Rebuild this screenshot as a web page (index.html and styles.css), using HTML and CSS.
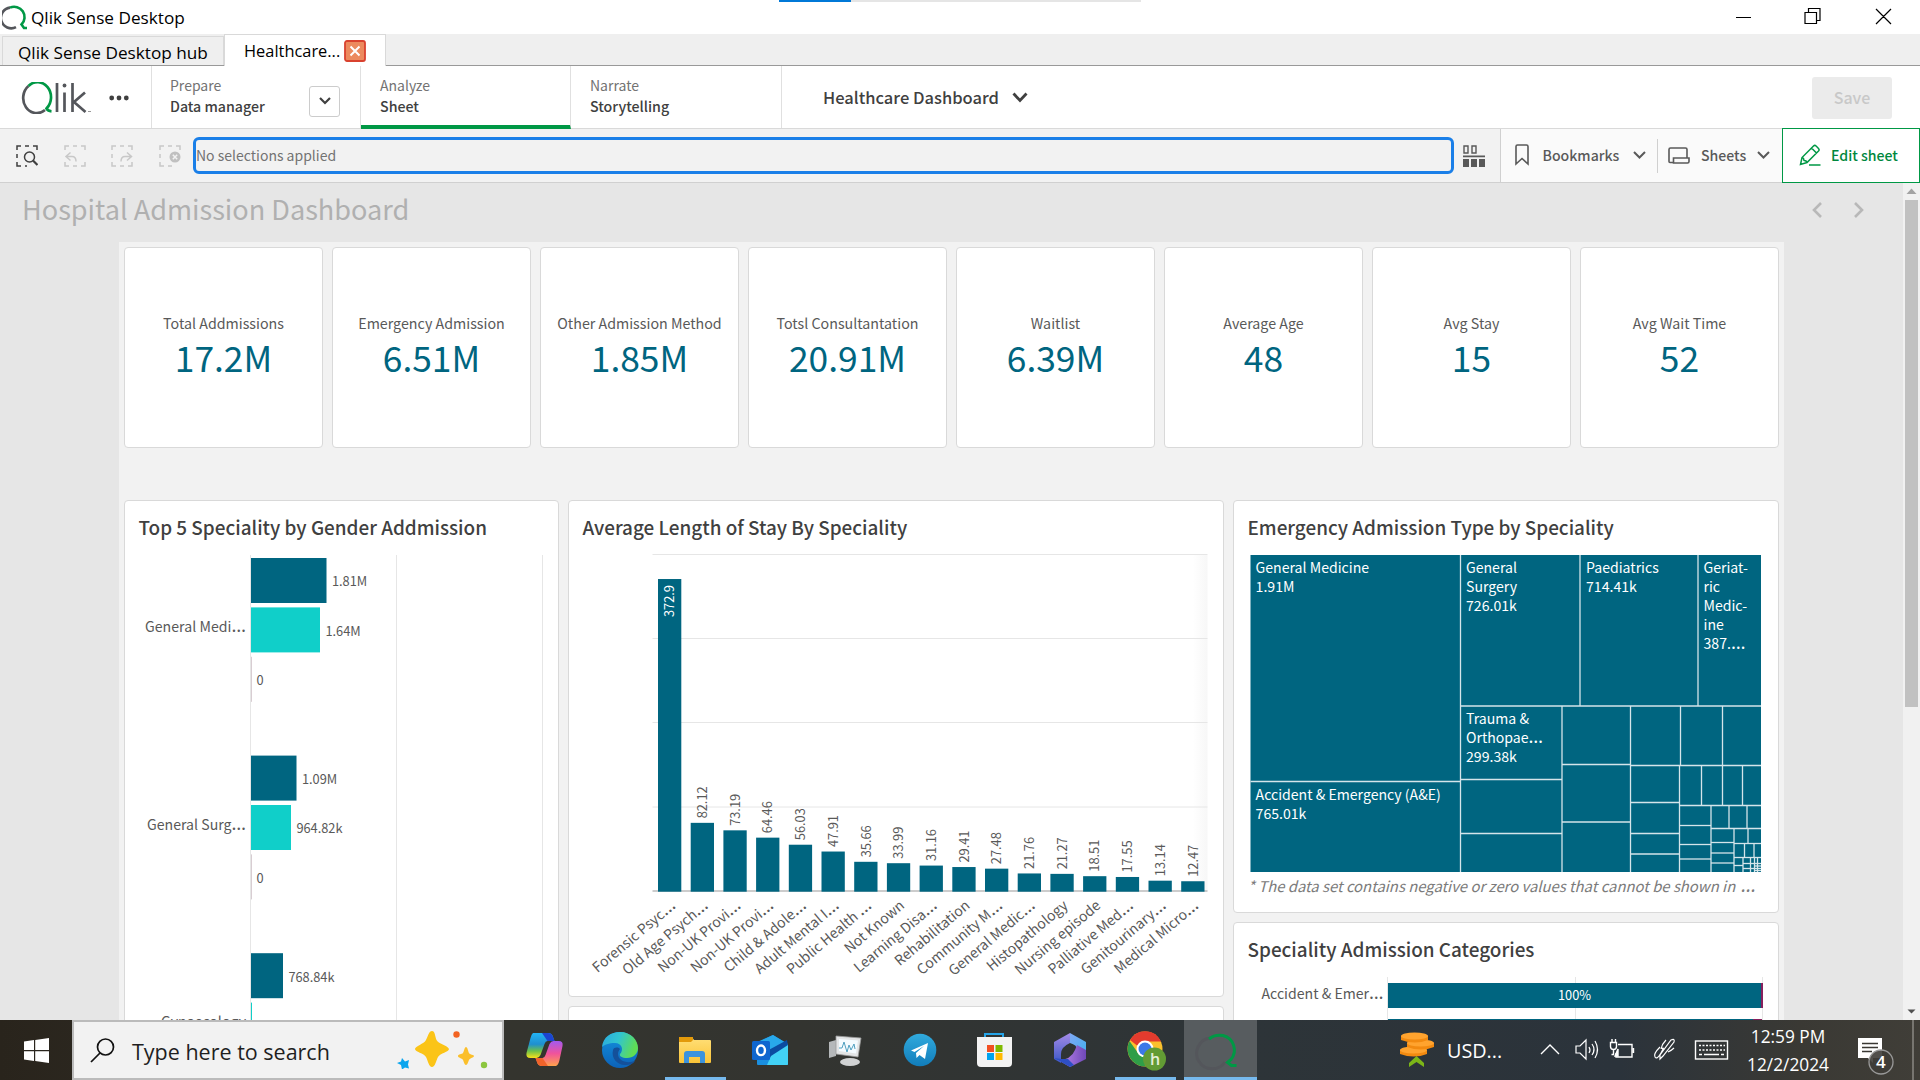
FILE: index.html
```html
<!DOCTYPE html>
<html lang="en">
<head>
<meta charset="utf-8">
<title>Qlik Sense Desktop</title>
<link rel="stylesheet" href="styles.css">
</head>
<body>
<div class="screen">
  <header class="titlebar">
    <svg class="app-icon" width="26" height="26" viewBox="0 0 26 26" fill="none" stroke-width="2.6"><path d="M14 23.2A10.4 10.4 0 1 1 8 3.6" stroke="#54565b"/><path d="M8 3.6A10.4 10.4 0 0 1 19.5 20.5L22 24h3" stroke="#009845"/></svg>
    <span class="app-name">Qlik Sense Desktop</span>
    <div class="load"><i></i></div>
    <svg class="winctl" width="200" height="34" viewBox="1720 0 200 34" fill="none" stroke="#000" stroke-width="1.2"><path d="M1736 17.5h15M1808.500 12.500v-4h11.500v12h-3M1805 12.500h11.500v11h-11.500zM1876 9l15 15M1891 9l-15 15"/></svg>
  </header>
  <div class="tabs">
    <div class="tab">Qlik Sense Desktop hub</div>
    <div class="tab active">Healthcare...<svg width="22" height="22" viewBox="0 0 22 22"><rect x="1" y="1" width="20" height="20" rx="2" fill="#ec8a5e" stroke="#d9422f" stroke-width="1.8"/><path d="M6.500 6.500l9 9M15.500 6.500l-9 9" stroke="#fff" stroke-width="2"/></svg></div>
  </div>
  <nav class="nav">
    <div class="brand">
      <svg width="70" height="32" viewBox="0 0 70 32" fill="none"><g stroke-width="2.700"><path d="M24 28A13 14.500 0 1 1 7.500 4" stroke="#54565b"/><path d="M7.500 4A13 14.500 0 0 1 25.500 26.500q1.500 2.500 5 2.800" stroke="#009845"/></g><path d="M36 1v29M43.500 10.500v19.500M51.500 1v29M64 10.500L53 20l11.500 10" stroke="#54565b" stroke-width="2.700"/><circle cx="43.500" cy="3.500" r="1.900" fill="#54565b"/><path d="M67 29.500h3" stroke="#999" stroke-width="1"/></svg>
      <svg width="20" height="6" viewBox="0 0 20 6" fill="#404040"><circle cx="2.700" cy="3" r="2.400"/><circle cx="10" cy="3" r="2.400"/><circle cx="17.300" cy="3" r="2.400"/></svg>
    </div>
    <div class="step prep"><div><small>Prepare</small><b>Data manager</b></div><span class="drop"><svg width="12" height="8" viewBox="0 0 12 8" fill="none" stroke="#404040" stroke-width="2.200"><path d="M1 1l5 5 5-5"/></svg></span></div>
    <div class="step current"><div><small>Analyze</small><b>Sheet</b></div></div>
    <div class="step"><div><small>Narrate</small><b>Storytelling</b></div></div>
    <div class="appname">Healthcare Dashboard<svg width="16" height="11" viewBox="0 0 16 11" fill="none" stroke="#404040" stroke-width="2.800"><path d="M1.500 1.500L8 8.500l6.500-7"/></svg></div>
    <button class="save">Save</button>
  </nav>
  <div class="toolbar">
    <div class="seltools">
      <svg width="22" height="22" viewBox="0 0 22 22" fill="none" stroke="#404040" stroke-width="1.500"><path d="M1 5V1h4M9 1h4M17 1h4v4M1 9v4M1 17v4h4M9 21h2"/><circle cx="13.500" cy="12" r="5"/><path d="M17 15.500l4.500 4.500" stroke-width="2.200"/></svg>
      <svg width="22" height="22" viewBox="0 0 22 22" fill="none" stroke="#c8c8c8" stroke-width="1.500"><path d="M1 5V1h4M9 1h4M17 1h4v4M1 17v4h4M9 21h4M17 21h4v-4M6.500 7.500L2 11.500l4.500 4M2 11.500h6q4 0 4 5"/></svg>
      <svg width="22" height="22" viewBox="0 0 22 22" fill="none" stroke="#c8c8c8" stroke-width="1.500"><path d="M1 5V1h4M9 1h4M17 1h4v4M1 17v4h4M9 21h4M17 21h4v-4M1 9v4M16 7.500l4.500 4-4.500 4M20 11.500h-6q-4 0-4 5"/></svg>
      <svg width="22" height="22" viewBox="0 0 22 22" fill="none" stroke="#c8c8c8" stroke-width="1.500"><path d="M1 5V1h4M9 1h4M17 1h4v4M1 9v4M1 17v4h4M9 21h4"/><circle cx="16" cy="12" r="5.500" fill="#c0c0c0" stroke="none"/><path d="M13.800 9.800l4.400 4.400M18.200 9.800l-4.400 4.400" stroke="#f2f2f2"/></svg>
    </div>
    <div class="selections">No selections applied</div>
    <svg class="seltool" width="22" height="22" viewBox="0 0 22 22" fill="#595959"><path d="M1 1h4v7H1zM9 1h4v7H9z" fill="none" stroke="#595959" stroke-width="1.400"/><path d="M0 10.500h22v1.800H0zM0 14h6v8H0zM8 14h6v8H8zM16 14h6v8h-6z"/></svg>
    <div class="right">
      <div class="item bm"><svg width="14" height="22" viewBox="0 0 14 22" fill="none" stroke="#595959" stroke-width="1.600"><path d="M1 20V2.500Q1 1 2.500 1h9Q13 1 13 2.500V20l-6-5.500z"/></svg>Bookmarks<svg width="13" height="8" viewBox="0 0 13 8" fill="none" stroke="#595959" stroke-width="2"><path d="M1 1l5.500 5.500L12 1"/></svg></div>
      <div class="item sh"><svg width="22" height="17" viewBox="0 0 22 17" fill="none" stroke="#595959" stroke-width="1.600"><path d="M5.500 15.500H2Q1 15.500 1 14.500v-12Q1 1 2.500 1h15Q19 1 19 2.500V11M5.500 16v-5H21v3.500q0 1.500-1.500 1.500h-14z"/></svg>Sheets<svg width="13" height="8" viewBox="0 0 13 8" fill="none" stroke="#595959" stroke-width="2"><path d="M1 1l5.500 5.500L12 1"/></svg></div>
      <div class="item edit"><svg width="22" height="22" viewBox="0 0 22 22" fill="none" stroke="#009845" stroke-width="1.500"><path d="M1.500 20.500L3 13.500 14.500 2q1.300-1.200 2.600 0l2.400 2.400q1.200 1.300 0 2.600L8 18.500zM12.500 4l5 5M3 13.500l1.500 1 .5 2 2 .5 1 1.500M10 21h11.500"/></svg>Edit sheet</div>
    </div>
  </div>
  <main class="sheet">
    <div class="sheet-main">
      <div class="sheet-head"><h1>Hospital Admission Dashboard</h1>
        <svg width="52" height="16" viewBox="0 0 52 16" fill="none" stroke="#b8b8b8" stroke-width="2.600"><path d="M9 1L2 8l7 7M43 1l7 7-7 7"/></svg></div>
      <div class="board">
        <div class="kpis">
          <div class="card kpi"><span>Total Addmissions</span><strong>17.2M</strong></div>
          <div class="card kpi"><span>Emergency Admission</span><strong>6.51M</strong></div>
          <div class="card kpi"><span>Other Admission Method</span><strong>1.85M</strong></div>
          <div class="card kpi"><span>Totsl Consultantation</span><strong>20.91M</strong></div>
          <div class="card kpi"><span>Waitlist</span><strong>6.39M</strong></div>
          <div class="card kpi"><span>Average Age</span><strong>48</strong></div>
          <div class="card kpi"><span>Avg Stay</span><strong>15</strong></div>
          <div class="card kpi"><span>Avg Wait Time</span><strong>52</strong></div>
        </div>
        <div class="charts">
          <section class="card tall"><h2>Top 5 Speciality by Gender Addmission</h2><svg id="gender" width="433" height="500" viewBox="125 545 433 500"></svg></section>
          <div class="col">
            <section class="card stay"><h2>Average Length of Stay By Speciality</h2><svg id="stay" width="654" height="450" viewBox="569 545 654 450"></svg></section>
            <section class="card rest"></section>
          </div>
          <div class="col">
            <section class="card tree"><h2>Emergency Admission Type by Speciality</h2><svg id="tree" width="545" height="330" viewBox="1234 545 545 330"></svg><p class="note">* The data set contains negative or zero values that cannot be shown in <span class="el">…</span></p></section>
            <section class="card rest"><h2>Speciality Admission Categories</h2><svg id="cats" width="545" height="100" viewBox="1234 967 545 100"></svg></section>
          </div>
        </div>
      </div>
    </div>
    <div class="scroll"><svg width="17" height="17" viewBox="0 0 17 17"><path d="M3.500 11L8.500 5.500 13.500 11z" fill="#a3a3a3"/></svg><i></i><svg width="17" height="17" viewBox="0 0 17 17"><path d="M4.500 6.500h8L8.500 10.500z" fill="#505050"/></svg></div>
  </main>
  <footer class="taskbar">
    <div class="start"><svg width="25" height="25" viewBox="0 0 25 25" fill="#fff"><path d="M0 3.500l10-1.400v10H0zM11.200 1.900L25 0v12.100H11.200zM0 13.200h10v9.700L0 21.500zM11.200 13.200H25V25l-13.800-1.900z"/></svg></div>
    <div class="search">
      <svg width="25" height="25" viewBox="0 0 25 25" fill="none" stroke="#111" stroke-width="1.700"><circle cx="15.500" cy="9" r="8"/><path d="M10 15L1 24"/></svg>
      <span>Type here to search</span>
      <svg width="92" height="38" viewBox="0 0 92 38"><path d="M35 0c3 0 3 5 4.500 9s11 5 12.500 9c0 3-9 4-11 8s-3 10-6 10-4-6-6-10-11-5-11-8 9-5 11-9 3-9 6-9z" fill="#fbc417"/><path d="M69 16c1.500 0 2 4 3 6s5 1.500 5 3-4 2-5 4-1.500 5-3 5-2-3-3-5-5-2-5-4 4-1.500 5-3 1.500-6 3-6z" fill="#fbbf2b"/><path d="M5 27l3 3.500 4-1.500-1 4.500 1 4-4-1-3 2-1-4.500-4-2 4-1.500z" fill="#0aa5ee"/><circle cx="59.500" cy="3.500" r="3.200" fill="#f26322"/><circle cx="87" cy="34" r="3.200" fill="#8cc63f"/></svg>
    </div>
    <svg class="apps" width="770" height="60" viewBox="504 1020 770 60">
      <defs>
        <linearGradient id="cpA" x1="0" y1="0" x2="0" y2="1"><stop offset="0" stop-color="#22b4f5"/><stop offset=".45" stop-color="#1f8fd0"/><stop offset=".72" stop-color="#6cc04a"/><stop offset="1" stop-color="#f9e21a"/></linearGradient>
        <linearGradient id="cpB" x1="0" y1="0" x2="0" y2="1"><stop offset="0" stop-color="#a259f0"/><stop offset=".5" stop-color="#f0539b"/><stop offset="1" stop-color="#ffa24c"/></linearGradient>
        <linearGradient id="edA" x1="0" y1="0" x2="1" y2=".3"><stop offset="0" stop-color="#2aa7e0"/><stop offset=".5" stop-color="#31c5cf"/><stop offset="1" stop-color="#5fdc55"/></linearGradient>
        <linearGradient id="edB" x1="0" y1="0" x2="0" y2="1"><stop offset="0" stop-color="#1493df"/><stop offset="1" stop-color="#0c62b8"/></linearGradient>
        <linearGradient id="fx" x1="0" y1="0" x2="0" y2="1"><stop offset="0" stop-color="#ffe07a"/><stop offset="1" stop-color="#fbc437"/></linearGradient>
        <linearGradient id="tg" x1="0" y1="0" x2="0" y2="1"><stop offset="0" stop-color="#31aadd"/><stop offset="1" stop-color="#117dbb"/></linearGradient>
        <linearGradient id="mB" x1="0" y1="0" x2="1" y2="1"><stop offset="0" stop-color="#7fa8f5"/><stop offset="1" stop-color="#3fb0ee"/></linearGradient>
        <linearGradient id="mA" x1="0" y1="0" x2="0" y2="1"><stop offset="0" stop-color="#a58be8"/><stop offset="1" stop-color="#3c58c8"/></linearGradient>
        <linearGradient id="mC" x1="0" y1="0" x2="1" y2="0"><stop offset="0" stop-color="#c38cf2"/><stop offset="1" stop-color="#6f48b8"/></linearGradient>
      </defs>
      <path d="M533 1033h15q4 0 5 4l1.500 4h-7q-2 0-3 3l-4 11q-1.500 3-4 3h-6q-5 0-4-5l4-15q1-4 2.500-5z" fill="url(#cpA)"/><path d="M542 1033h6q4 0 5 4l1.500 4h-7z" fill="#1c44d0"/>
      <path d="M557 1066h-15q-4 0-5-4l-1.500-4h7q2 0 3-3l4-11q1.500-3 4-3h5q5 0 4 5l-3 14q-1 5-3.500 6z" fill="url(#cpB)"/><path d="M548 1066h-6q-4 0-5-4l-1.500-4h7z" fill="#f0632a"/>
      <circle cx="620" cy="1050" r="18" fill="url(#edB)"/><path d="M602 1047c1-10 9-15 18-15 11 0 18 8 18 16 0 6-5 10-11 10-5 0-8-2-7-4 4-4 2-11-5-11-6 0-11 2-13 4z" fill="url(#edA)"/><path d="M613 1050c-2 8 4 15 12 15 5 0 8-1 10-4-8 3-17 0-17-7 0-2 1-4 2-5-2-2-6-2-7 1z" fill="#14509a"/>
      <path d="M679 1040v-2q0-1 1-1h12l2 3h16q1 0 1 1v21q0 1-1 1h-30q-1 0-1-1z" fill="url(#fx)"/><path d="M679 1037h14v3l-2 2h-12z" fill="#e39a0b"/><path d="M684 1063v-9q0-3 3-3h15q3 0 3 3v9h-5v-6h-11v6z" fill="#3c93dc"/>
      <path d="M757 1042l16-7 15 9v20q0 1-1 1h-29q-1 0-1-1z" fill="#1a8fe0"/><path d="M773 1035l13 8-16 12-12-4v-9z" fill="#28a8ea"/><path d="M765 1052l22-12 1 6-20 13z" fill="#0b4ba0"/><path d="M788 1045v19q0 1-1 1h-20l4-9z" fill="#42d1f5"/><rect x="752" y="1041" width="18" height="19" rx="1.500" fill="#0f66cf"/><ellipse cx="761" cy="1050.300" rx="4" ry="4.800" fill="none" stroke="#fff" stroke-width="2.400"/>
      <path d="M829 1042l7-2v16l-7 2z" fill="#b5b8ba"/><path d="M836 1036l25 2-3 19-22-3z" fill="#e3e5e6" stroke="#999" stroke-width=".8"/><path d="M839 1039l19 1.500-2 13-17-2.500z" fill="#f4fbff"/><path d="M839 1048h3l2-6 3 10 2-7 2 5 3-6 1 5" fill="none" stroke="#4f9fc0"/><ellipse cx="850" cy="1062" rx="10" ry="4" fill="#d0d2d3"/>
      <circle cx="920" cy="1050" r="16.300" fill="url(#tg)"/><path d="M911 1050.500l17-7.500-3 16-5.500-4-3 3-.5-5 8-7-9.500 6z" fill="#fff"/>
      <path d="M985 1038v-4h18v4" fill="none" stroke="#25a4e8" stroke-width="2"/><path d="M977 1037h35v26q0 4-4 4h-27q-4 0-4-4z" fill="#f3f3f3"/><path d="M987 1045h7v7h-7z" fill="#f25022"/><path d="M995.500 1045h7v7h-7z" fill="#7fba00"/><path d="M987 1053h7v7h-7z" fill="#00a4ef"/><path d="M995.500 1053h7v7h-7z" fill="#ffb900"/>
      <path d="M1070 1033l-16 9v17l7 4v-9q0-7 9-11z" fill="url(#mA)"/><path d="M1070 1033l16 9v16l-9-3v-6q0-4-7-6z" fill="url(#mB)"/><path d="M1086 1050v9l-16 8-12-7q13 0 17-10l2-5z" fill="url(#mC)"/><path d="M1054 1058l16 9 4-2-6-6h-7z" fill="#2e4fc4"/>
      <circle cx="1145" cy="1049" r="17.500" fill="#fbc02d"/><path d="M1130 1040a17.500 17.500 0 0 1 31 1.500H1145l-8 4z" fill="#e33b2e"/><path d="M1129.500 1041l8.500 12 7 4 0 9.500a17.500 17.500 0 0 1-15.500-25.500z" fill="#2f9e48"/><circle cx="1145" cy="1049" r="8.500" fill="#fff"/><circle cx="1145" cy="1049" r="6.500" fill="#3b78e7"/><circle cx="1154.500" cy="1059" r="11.500" fill="#629b34"/><text x="1150" y="1065" class="badge-h">h</text>
      <path d="M1184 1020h73v60h-73z" fill="#fff" fill-opacity=".2"/><path d="M1225 1062A15.500 15.500 0 1 1 1210 1038" fill="none" stroke="#54565b" stroke-width="3"/><path d="M1209 1039q6-5 14-3.500a15 15 0 0 1 8 24l-3.500 3 4 3h5" fill="none" stroke="#009845" stroke-width="3"/>
      <path d="M665 1077h61v3h-61zM1115 1077h61v3h-61zM1184 1077h73v3h-73z" fill="#76b9ed"/>
    </svg>
    <div class="tray">
      <svg width="36" height="36" viewBox="0 0 36 36"><path d="M9 31l7.500-7 7.500 7v4l-7.500-5-7.500 5z" fill="#7cb518"/><g fill="#f28a10"><path d="M0 18v4q14 5 27 0v-4z"/><ellipse cx="13.500" cy="18" rx="13.500" ry="3.500" fill="#ffa32e"/><path d="M7 11v4q14 5 27 0v-4z"/><ellipse cx="20.500" cy="11" rx="13.500" ry="3.500" fill="#ffa32e"/><path d="M1 4v4q14 5 27 0V4z"/><ellipse cx="14.500" cy="4" rx="13.500" ry="3.500" fill="#ffa32e"/></g></svg>
      <span class="usd">USD...</span>
      <svg width="192" height="30" viewBox="1538 1035 192 30" fill="none" stroke="#fff" stroke-width="1.400"><path d="M1541 1054l9-9 9 9"/><path d="M1576 1046h4l6-6v19l-6-6h-4zM1589 1047q2 3 0 6M1592 1044q4 5.500 0 11M1595 1041q5 8.500 0 17" stroke-width="1.200"/><path d="M1618 1044.500h14v12.500h-16v-4M1633.500 1048v5M1610.500 1042.500h6v4q0 3-3 3t-3-3zM1612 1042v-3M1615.500 1042v-3M1613.500 1049.500v5h-2"/><path d="M1618 1049v7h-3z" fill="#fff"/><path d="M1671 1040q4-2 3 2l-11 14-3 3 0-4zM1660 1047q-7 7-5 10t6-4q4-7 1-4M1668 1052q4-2 6-4M1666 1040q-4 4-5 9" stroke-width="1.200"/><rect x="1695.500" y="1041" width="32" height="18"/><path d="M1699 1045.500h26M1699 1050h26" stroke-dasharray="2 1.500"/><path d="M1699 1054.500h3M1704 1054.500h15M1721 1054.500h3"/></svg>
      <div class="clock">12:59 PM<br>12/2/2024</div>
      <svg width="60" height="60" viewBox="1856 1020 60 60"><path d="M1858 1038h24v20h-9v5l-5-5h-10z" fill="#fff"/><path d="M1862 1043.500h16M1862 1047.500h16M1862 1051.500h10" stroke="#3a3833" stroke-width="1.300"/><circle cx="1881" cy="1062" r="12" fill="#3e3c37" fill-opacity=".9" stroke="#999" stroke-width="1.300"/><text x="1876" y="1068" class="badge-n">4</text><path d="M1913 1020v60" stroke="#8a8983" stroke-width="1.500"/></svg>
    </div>
  </footer>
</div>
<script src="charts.js"></script>
</body>
</html>
```
FILE: styles.css
```css
* { box-sizing: border-box; }
body { margin: 0; font-family: "Noto Sans CJK SC", "Noto Sans", sans-serif; color: #404040; }
svg { display: block; flex: none; }
.screen { width: 1920px; height: 1080px; display: flex; flex-direction: column; overflow: hidden; background: #fff; }

.titlebar { height: 34px; flex: none; display: flex; align-items: center; position: relative; padding-left: 2px; font-family: "Open Sans", sans-serif; color: #000; }
.app-name { margin-left: 3px; font-size: 17.2px; }
.load { position: absolute; left: 779px; top: 0; width: 362px; height: 2px; background: #e5e5e5; }
.load i { display: block; width: 72px; height: 2px; background: #0078d7; }
.winctl { margin-left: auto; }

.tabs { height: 32px; flex: none; display: flex; align-items: flex-end; background: #efefef; border-bottom: 1px solid #999; padding-left: 2px; font: 17.2px "Open Sans", sans-serif; color: #000; }
.tab { width: 222px; height: 29px; border: 1px solid #d9d9d9; border-bottom: 0; padding-left: 15px; line-height: 31px; white-space: nowrap; }
.tab.active { width: 162px; height: 32px; margin-bottom: -1px; background: #fff; padding-left: 19px; display: flex; align-items: center; gap: 4px; line-height: 30px; font-size: 16.4px; }

.nav { height: 63px; flex: none; display: flex; border-bottom: 1px solid #d9d9d9; }
.brand { width: 152px; border-right: 1px solid #e0e0e0; display: flex; align-items: center; padding: 1px 0 0 21px; gap: 18px; }
.step { width: 210px; border-right: 1px solid #e0e0e0; display: flex; align-items: center; justify-content: space-between; padding: 0 20px 2px 19px; }
.step.prep { width: 209px; padding-left: 18px; }
.step.current { border-bottom: 4px solid #009845; margin-bottom: -1px; padding-bottom: 0; }
.step:nth-child(4) { width: 211px; }
.step small, .step b { display: block; font-size: 14.2px; line-height: 21px; font-weight: 500; }
.step small { font-size: 14px; font-weight: 400; color: #737373; }
.drop { width: 31px; height: 31px; margin-top: 10px; border: 1px solid #ccc; border-radius: 3px; display: flex; align-items: center; justify-content: center; }
.appname { display: flex; align-items: center; gap: 13px; padding: 0 0 0 41px; font-size: 16.5px; font-weight: 500; }
.save { margin: 11px 28px 0 auto; width: 80px; height: 42px; padding: 0 0 2px; border: 0; border-radius: 3px; background: #ebebeb; color: #c8c8c8; font: 500 16px "Noto Sans CJK SC", sans-serif; }

.toolbar { height: 54px; flex: none; display: flex; align-items: center; background: #f2f2f2; border-bottom: 1px solid #d0d0d0; }
.seltools { display: flex; gap: 25.5px; padding-left: 16px; width: 193px; }
.selections { width: 1261px; height: 37px; border: 3px solid #1a7fe8; border-radius: 6px; font-size: 14px; line-height: 31px; color: #737373; }
.seltool { margin-left: 9px; }
.right { margin-left: auto; width: 420px; height: 53px; align-self: flex-start; display: flex; align-items: center; background: #fafafa; border-left: 1px solid #d0d0d0; font-size: 14.1px; font-weight: 500; color: #595959; }
.item { display: flex; align-items: center; height: 34px; padding-bottom: 1px; }
.bm { width: 157px; padding-left: 14px; gap: 13.5px; border-right: 1px solid #d0d0d0; }
.sh { width: 124px; padding-left: 10px; gap: 11px; }
.edit { width: 138px; height: 55px; border: 1px solid #009845; background: #fff; color: #00873d; padding-left: 16px; gap: 10px; }

.sheet { height: 837px; flex: none; display: flex; background: #e6e6e6; overflow: hidden; }
.sheet-main { width: 1903px; padding: 0 0 0 119px; }
.sheet-head { height: 59px; margin-left: -97px; display: flex; justify-content: space-between; align-items: center; padding: 0 39px 6px 0; }
h1 { margin: 0 0 2px; font-size: 27.1px; font-weight: 400; line-height: 40px; color: #b0b0b0; }
.board { width: 1665px; height: 860px; background: #f2f2f2; padding: 5px; }
.card { background: #fff; border: 1px solid #d9d9d9; border-radius: 4px; overflow: hidden; }
.kpis { display: grid; grid-template-columns: repeat(8, 199px); column-gap: 9px; }
.kpi { height: 201px; display: flex; flex-direction: column; align-items: center; padding-top: 65px; color: #595959; font-size: 14.25px; line-height: 20px; white-space: nowrap; }
.kpi strong { font-weight: 400; font-size: 35.4px; line-height: 47px; color: #006580; }
.charts { margin-top: 52px; display: grid; grid-template-columns: 435px 656px 546px; column-gap: 9px; }
.col { display: flex; flex-direction: column; gap: 9px; }
.tall { height: 560px; }
.stay { height: 497px; }
.tree { height: 413px; }
.rest { height: 200px; }
h2 { margin: 0; height: 44px; padding: 12px 0 0 13.5px; font-size: 18.9px; line-height: 28px; font-weight: 500; }
.note { margin: -1px 0 0 14px; font-size: 14.85px; line-height: 24px; font-style: italic; color: #7b7b7b; white-space: nowrap; }
.note .el { margin-left: 3px; }
.el { font-family: "Noto Sans", sans-serif; font-size: 1.3em; line-height: 0; }

.lbl { font-size: 14.1px; fill: #595959; }
.val { font-size: 12.8px; fill: #595959; }
.inv { fill: #fff; }
.cell { font-size: 14.1px; fill: #fff; }

.scroll { width: 17px; background: #f1f1f1; display: flex; flex-direction: column; }
.scroll i { width: 13px; height: 507px; margin: 0 2px auto; background: #c1c1c1; }

.taskbar { height: 60px; flex: none; display: flex; background: linear-gradient(90deg, #29241c 0, #34342e 504px, #333430 800px, #2d3438 1250px, #2b333b 1620px, #3a3934 1800px, #403e38 1920px); }
.start { width: 72px; display: flex; align-items: center; justify-content: center; }
.search { width: 432px; border: 2px solid #bbb; background: #f2f2f2; display: flex; align-items: center; padding: 0 13px 0 16px; font: 21.5px "Open Sans", sans-serif; color: #1f1f1f; }
.search span { margin: 2px auto 0 17px; }
.badge-h { font: 600 16px "Open Sans", sans-serif; fill: #e6efd9; }
.badge-n { font: 600 17px "Open Sans", sans-serif; fill: #fff; }
.tray { flex: 1; display: flex; align-items: center; padding-left: 126px; color: #fff; font-family: "Open Sans", sans-serif; }
.usd { width: 102px; padding: 1px 0 0 11px; font-size: 19.8px; }
.clock { width: 116px; margin: 2px 10px 0 0; text-align: center; font-size: 17.3px; line-height: 28px; }
```
FILE: charts.js
```js
const TEAL = '#006580', CYAN = '#10cfc9', GRID = '#e6e6e6';
const rect = (x, y, w, h, fill) => `<rect x="${x}" y="${y}" width="${w}" height="${h}" fill="${fill}"/>`;
const line = (x1, y1, x2, y2, color, w = 1) => `<path d="M${x1} ${y1}L${x2} ${y2}" stroke="${color}" stroke-width="${w}"/>`;
const text = (x, y, s, cls, extra = '') =>
  `<text x="${x}" y="${y}" class="${cls}" ${extra}>${s.replace(/&/g, '&amp;').replace('…', '<tspan class="el">…</tspan>')}</text>`;
const draw = (id, s) => { document.getElementById(id).innerHTML = s; };

// Admissions by gender
let s = [250.5, 396.5, 542.5].map(x => line(x, 555, x, 1045, GRID)).join('');
[
  ['General Medi…', 558, [[75.5, '1.81M'], [69, '1.64M'], [0, '0']]],
  ['General Surg…', 755.6, [[45.5, '1.09M'], [40, '964.82k'], [0, '0']]],
  ['Gynaecology', 953.2, [[32, '768.84k'], [1, '']]]
].forEach(([name, top, bars]) => {
  bars.forEach(([w, label], i) => {
    const y = top + i * 49.4;
    s += rect(251, y, w || 1, 45, w ? [TEAL, CYAN][i] : '#d8cdd2');
    s += text(251 + w + 5.4, y + 28.3, label, 'val');
  });
  s += text(246, top + 74, name, 'lbl', 'text-anchor="end" textLength="' + (name.startsWith('Gy') ? 85 : name.endsWith('di…') ? 101 : 99) + '"');
});
draw('gender', s);

// Average length of stay
const stay = [['Forensic Psyc…', 372.9], ['Old Age Psych…', 82.12], ['Non-UK Provi…', 73.19], ['Non-UK Provi…', 64.46], ['Child & Adole…', 56.03], ['Adult Mental I…', 47.91], ['Public Health …', 35.66], ['Not Known', 33.99], ['Learning Disa…', 31.16], ['Rehabilitation', 29.41], ['Community M…', 27.48], ['General Medic…', 21.76], ['Histopathology', 21.27], ['Nursing episode', 18.51], ['Palliative Med…', 17.55], ['Genitourinary…', 13.14], ['Medical Micro…', 12.47]];
s = '<defs><linearGradient id="fade"><stop offset="0" stop-color="#fff"/><stop offset="1" stop-color="#f7f7f7"/></linearGradient></defs>';
s += rect(1193, 555, 14.500, 336, 'url(#fade)');
s += [554.5, 638.5, 722.5, 807].map(y => line(652.5, y, 1207.5, y, GRID)).join('') + line(652.5, 891, 1207.5, 891, '#ccc', 2);
stay.forEach(([name, v], i) => {
  const x = 658 + i * 32.7, h = v * 0.8385, y = 891.7 - h, cx = x + 16.300;
  s += rect(x, y, 23.3, h, TEAL);
  s += i ? text(0, 0, v.toFixed(2), 'val', `transform="translate(${cx} ${y - 4.500}) rotate(-90)"`)
         : text(0, 0, '372.9', 'val inv', `transform="translate(${cx} ${y + 38}) rotate(-90)"`);
  s += text(0, 0, name, 'lbl', `text-anchor="end" transform="translate(${x + 18.500} 907) rotate(-40)"`);
});
draw('stay', s);

// Emergency admission treemap: cell borders as [x1, y1, x2, y2]
s = rect(1250.5, 555, 510.500, 317, TEAL);
[
  [1460.5, 555, 1460.5, 872], [1250.5, 781.5, 1460.5, 781.5], [1460.5, 706, 1761, 706],
  [1580, 555, 1580, 706], [1698, 555, 1698, 706],
  [1562, 706, 1562, 872], [1460.5, 779.5, 1562, 779.5], [1460.5, 833.5, 1562, 833.5],
  [1630.5, 706, 1630.5, 872], [1562, 764.5, 1630.5, 764.5], [1562, 822, 1630.5, 822],
  [1630.5, 765.5, 1761, 765.5], [1680.5, 706, 1680.5, 765.5], [1722.5, 706, 1722.5, 765.5],
  [1679.5, 765.5, 1679.5, 872], [1630.5, 802.5, 1679.5, 802.5], [1630.5, 833.5, 1679.5, 833.5], [1630.5, 854, 1679.5, 854],
  [1679.5, 805.5, 1761, 805.5], [1701.5, 765.5, 1701.5, 805.5], [1722.5, 765.5, 1722.5, 805.5], [1742.5, 765.5, 1742.5, 805.5],
  [1711, 805.5, 1711, 872], [1679.5, 825.5, 1711, 825.5], [1679.5, 844.5, 1711, 844.5], [1679.5, 859, 1711, 859],
  [1711, 828.5, 1761, 828.5], [1729, 805.5, 1729, 828.5], [1747, 805.5, 1747, 828.5],
  [1734, 828.5, 1734, 872], [1711, 842.5, 1734, 842.5], [1711, 853, 1734, 853], [1711, 863, 1734, 863],
  [1734, 843.5, 1761, 843.5], [1748, 828.5, 1748, 843.5], [1734, 857.5, 1761, 857.5], [1744.5, 843.5, 1744.5, 857.5], [1754, 843.5, 1754, 857.5],
  [1743, 857.5, 1743, 872], [1734, 865.5, 1743, 865.5], [1743, 863.5, 1761, 863.5], [1743, 868.500, 1761, 868.500],
  [1750.5, 857.5, 1750.5, 872], [1754.5, 857.5, 1754.5, 872], [1757.5, 857.5, 1757.5, 872], [1755, 866, 1761, 866], [1755, 870.5, 1761, 870.5]
].forEach(b => { s += line(...b, '#d5e5ea', 1.3); });
[
  [1255.600, 572.500, ['General Medicine', '1.91M']], [1255.600, 799.500, ['Accident & Emergency (A&E)', '765.01k']],
  [1466, 572.500, ['General', 'Surgery', '726.01k']], [1586, 572.500, ['Paediatrics', '714.41k']],
  [1703.5, 572.500, ['Geriat-', 'ric', 'Medic-', 'ine', '387.…']], [1466, 724, ['Trauma &', 'Orthopae…', '299.38k']]
].forEach(([x, y, rows]) => rows.forEach((r, i) => { s += text(x, y + i * 19, r, 'cell'); }));
draw('tree', s);

// Admission categories
s = [1387.5, 1575.5, 1762.5].map(x => line(x, 977, x, 1067, GRID)).join('');
s += rect(1388, 983, 373, 25, TEAL) + rect(1761, 983, 2, 25, '#87205d');
s += rect(1388, 1019, 365, 25, TEAL) + rect(1753, 1019, 9, 25, '#87205d');
s += text(1383.5, 999, 'Accident & Emer…', 'lbl', 'text-anchor="end" textLength="122"');
s += text(1574.5, 1000, '100%', 'val inv', 'text-anchor="middle"');
draw('cats', s);
```
